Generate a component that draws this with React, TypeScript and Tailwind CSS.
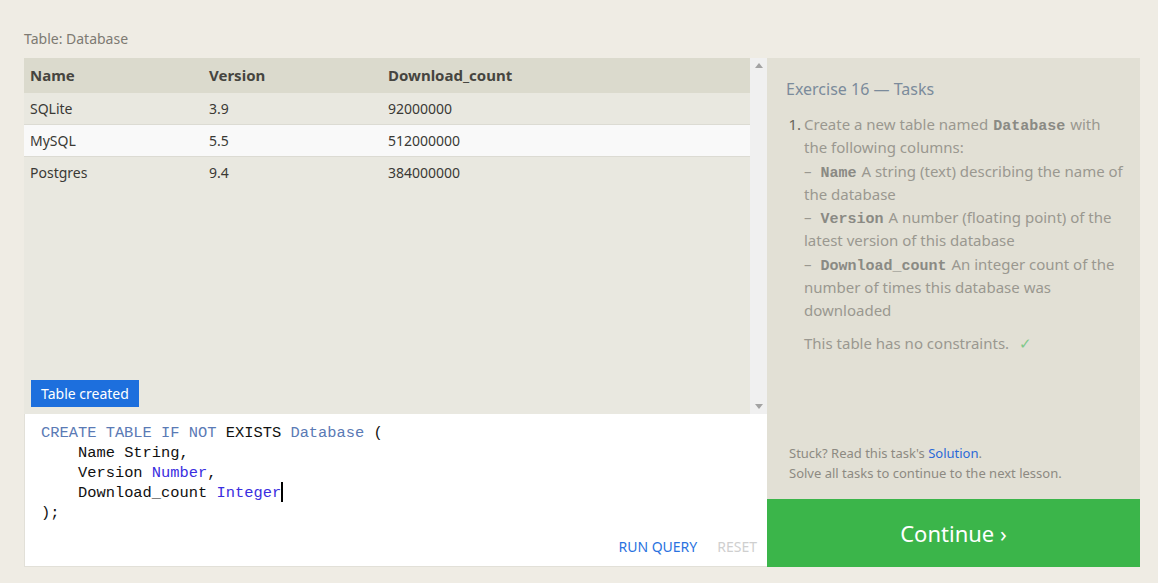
import React from "react";

const rows = [
  { name: "SQLite", version: "3.9", count: "92000000" },
  { name: "MySQL", version: "5.5", count: "512000000" },
  { name: "Postgres", version: "9.4", count: "384000000" },
];

const mono = "font-['Liberation_Mono','DejaVu_Sans_Mono',monospace]";

const Code = ({ children }: { children: React.ReactNode }) => (
  <code className={`${mono} mx-[5px] font-bold text-[15px] leading-[1] text-[#8a8a84]`}>{children}</code>
);

const App = () => {
  return (
    <div className="min-h-[583px] bg-[#efece4] pl-6 pt-[28px] font-['Noto_Sans','Open_Sans',sans-serif]">
      <div className="h-[30px] text-[14px] leading-[22px] text-[#7d7a72]">Table: Database</div>

      <div className="flex w-[1116px]">
        {/* left column */}
        <div className="flex w-[743px] flex-col">
          <div className="flex h-[356px]">
            <div className="flex flex-1 flex-col bg-[#e9e8e0]">
              <div className="flex h-[35px] items-center bg-[#dbdacd] px-[6px] text-[15px] font-bold text-[#464540]">
                <div className="w-[179px]">Name</div>
                <div className="w-[179px]">Version</div>
                <div>Download_count</div>
              </div>
              {rows.map((r, i) => (
                <div
                  key={r.name}
                  className={`flex h-[32px] items-center border-b px-[6px] text-[14px] text-[#3a3935] ${
                    i === 1 ? "bg-[#f9f9f9]" : "bg-[#e9e8e0]"
                  } ${i < rows.length - 1 ? "border-[#dcdbd3]" : "border-transparent"}`}
                >
                  <div className="w-[179px]">{r.name}</div>
                  <div className="w-[179px]">{r.version}</div>
                  <div>{r.count}</div>
                </div>
              ))}
              <div className="mt-auto px-[7px] pb-[7px]">
                <span className="inline-block bg-[#1d6fdd] px-[10px] py-[3px] text-[14px] leading-[21px] text-white">
                  Table created
                </span>
              </div>
            </div>
            {/* scrollbar */}
            <div className="flex w-[17px] flex-col items-center justify-between bg-[#f0f0f0] py-[5px]">
              <svg width="8" height="5" viewBox="0 0 8 5">
                <path d="M0 5 L4 0 L8 5 Z" fill="#a3a3a3" />
              </svg>
              <svg width="8" height="5" viewBox="0 0 8 5">
                <path d="M0 0 L4 5 L8 0 Z" fill="#a3a3a3" />
              </svg>
            </div>
          </div>

          {/* editor */}
          <div className="flex h-[153px] flex-col border-b border-l border-[#e2e0d8] bg-white">
            <pre className={`${mono} px-[16px] pt-[9px] text-[15.4px] leading-[20px] text-[#111]`}>
              <span className="text-[#5a7ab5]">CREATE TABLE IF NOT</span> EXISTS{" "}
              <span className="text-[#5a7ab5]">Database</span> ({"\n"}
              {"    "}Name String,{"\n"}
              {"    "}Version <span className="text-[#3a2ee0]">Number</span>,{"\n"}
              {"    "}Download_count <span className="text-[#3a2ee0]">Integer</span>
              <span className="relative">
                <span className="absolute left-0 top-[-2px] h-[20px] w-[2px] bg-black" />
              </span>
              {"\n"});
            </pre>
            <div className="mt-auto flex justify-end gap-[20px] pb-[9px] pr-[10px] text-[14px] leading-[20px]">
              <span className="text-[#2a72e0]">RUN QUERY</span>
              <span className="text-[#cfcfcf]">RESET</span>
            </div>
          </div>
        </div>

        {/* right column */}
        <div className="flex w-[373px] flex-col">
          <div className="flex flex-1 flex-col bg-[#e2e0d5] pl-[19px] pr-[14px] pt-[20px]">
            <h2 className="text-[16px] leading-[22px] text-[#7b8b9b]">Exercise 16 — Tasks</h2>
            <ol className="mt-[13px] text-[15px] leading-[23.3px] text-[#9a9890]">
              <li className="flex">
                <span className="w-[15px] shrink-0 text-right text-[#6a665c]">1.</span>
                <div className="pl-[3px]">
                  <div>
                    Create a new table named<Code>Database</Code>with the following columns:
                    <br />– <Code>Name</Code>A string (text) describing the name of the database
                    <br />– <Code>Version</Code>A number (floating point) of the latest version of this database
                    <br />– <Code>Download_count</Code>An integer count of the number of times this database was
                    downloaded
                  </div>
                  <div className="mt-[9px]">
                    This table has no constraints. <span className="ml-[6px] text-[#7fc98a]">✓</span>
                  </div>
                </div>
              </li>
            </ol>
            <div className="mt-auto pb-[16px] pl-[3px] text-[13px] leading-[20px] text-[#8d8a82]">
              Stuck? Read this task's <span className="text-[#2a6ad8]">Solution</span>.
              <br />
              Solve all tasks to continue to the next lesson.
            </div>
          </div>
          <div className="flex h-[68px] items-center justify-center bg-[#3bb54a] text-[22px] text-white">
            Continue ›
          </div>
        </div>
      </div>
    </div>
  );
};

export default App;
